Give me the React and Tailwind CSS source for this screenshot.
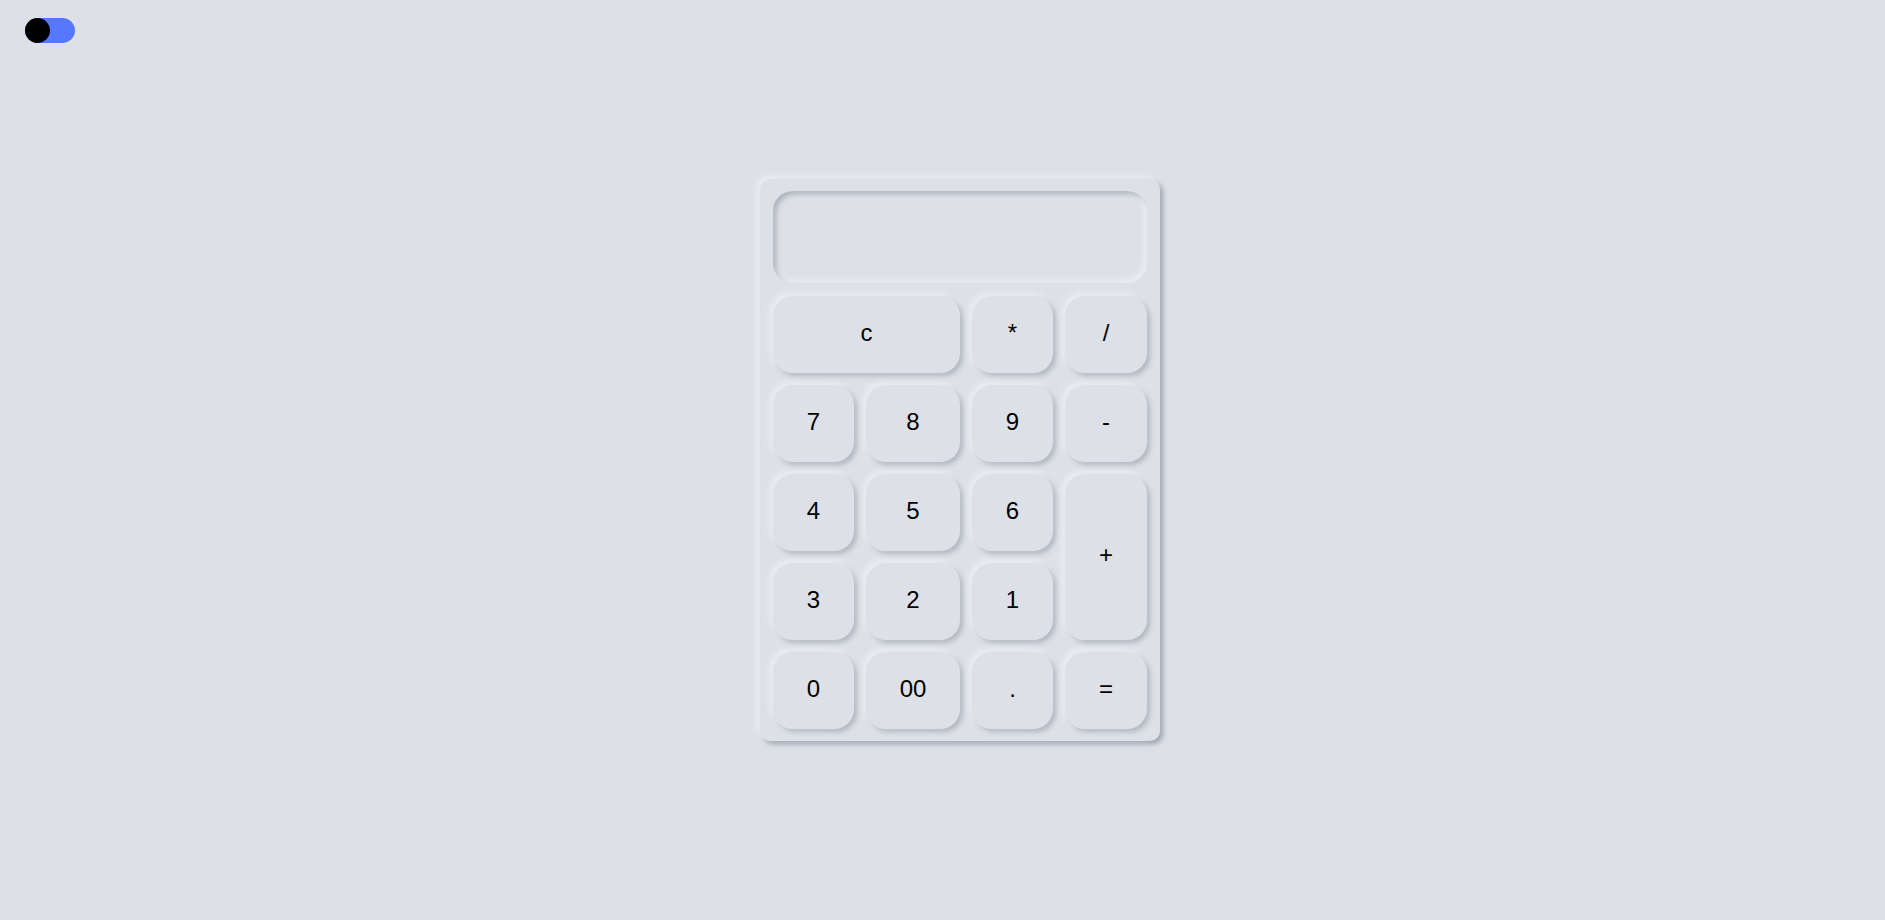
import { useState } from "react";

const keys = [
  { label: "c", cls: "col-span-2" },
  { label: "*" },
  { label: "/" },
  { label: "7" },
  { label: "8" },
  { label: "9" },
  { label: "-" },
  { label: "4" },
  { label: "5" },
  { label: "6" },
  { label: "+", cls: "row-span-2" },
  { label: "3" },
  { label: "2" },
  { label: "1" },
  { label: "0" },
  { label: "00" },
  { label: "." },
  { label: "=" },
];

export default function App() {
  const [value, setValue] = useState("");

  const press = (k) => {
    if (k === "c") return setValue("");
    if (k === "=") {
      try {
        // eslint-disable-next-line no-new-func
        setValue(String(Function(`return (${value})`)()));
      } catch {
        setValue("Error");
      }
      return;
    }
    setValue(value + k);
  };

  return (
    <div
      className="relative min-h-screen bg-[#dde1e7] flex items-center justify-center"
      style={{ fontFamily: "'Liberation Sans', Arial, sans-serif" }}
    >
      {/* theme toggle */}
      <button className="absolute top-[18px] left-[25px] w-[50px] h-[25px] rounded-full bg-[#5677ff]">
        <span className="block w-[25px] h-[25px] rounded-full bg-black" />
      </button>

      <div className="ml-[35px] w-[400px] rounded-[10px] bg-[#dde1e7] px-[13px] py-[12px] shadow-[-3px_-3px_7px_#ffffff73,3px_3px_5px_rgba(94,104,121,0.5)]">
        <input
          value={value}
          readOnly
          className="w-full h-[92px] rounded-[20px] bg-[#dde1e7] px-5 text-right text-[30px] text-black outline-none shadow-[inset_-3px_-3px_7px_#ffffff73,inset_3px_3px_5px_rgba(94,104,121,0.4)]"
        />
        <div className="mt-[13px] grid grid-cols-[81px_94px_81px_82px] auto-rows-[77px] gap-[12px]">
          {keys.map((k) => (
            <button
              key={k.label}
              onClick={() => press(k.label)}
              className={`${k.cls || ""} rounded-[20px] bg-[#dde1e7] pb-[4px] text-[24px] text-black flex items-center justify-center shadow-[-3px_-3px_7px_#ffffff73,3px_3px_5px_rgba(94,104,121,0.35)]`}
            >
              {k.label}
            </button>
          ))}
        </div>
      </div>
    </div>
  );
}
